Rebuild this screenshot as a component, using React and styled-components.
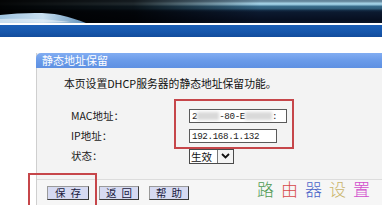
import React from "react";
import styled, { createGlobalStyle } from "styled-components";

const Global = createGlobalStyle`
  html, body { margin: 0; padding: 0; background: #ffffff; overflow: hidden; }
  body { width: 382px; height: 205px; font-family: "Noto Sans CJK SC", "Liberation Sans", sans-serif; }
`;

const Page = styled.div`
  position: relative;
  width: 382px;
  height: 205px;
  overflow: hidden;
  background: #ffffff;
`;

const Banner = styled.div`
  position: relative;
  height: 23px;
  background:
    linear-gradient(90deg, rgba(0,0,0,0.97) 0%, rgba(0,0,0,0.8) 35%, rgba(0,0,0,0) 68%),
    linear-gradient(180deg,
      #5e7f96 0px, #6f93a8 2px, #a6d2e6 3px, #8fc0d8 5px, #3b6f8e 6px, #2d5a78 9px,
      #16304a 10px, #0c1a30 12px, #070f20 20px, #0b1628 23px);
  overflow: hidden;
`;

const Wave = styled.svg`
  position: absolute;
  left: 0;
  bottom: 0;
`;

const WhiteLine = styled.div`
  height: 2px;
  background: #ffffff;
`;

const BlueBar = styled.div`
  height: 12px;
  background: linear-gradient(180deg, #1b5fb6 0%, #1656ab 60%, #134c9c 100%);
`;

const Content = styled.div`
  padding: 16px 0 0 36px;
`;

const Panel = styled.div`
  border-left: 1px solid #cfcfcf;
  background: #f3f3f3;
`;

const PanelHeader = styled.div`
  height: 15px;
  line-height: 15px;
  padding-left: 6px;
  margin-left: -1px;
  border-top-left-radius: 5px;
  background: linear-gradient(180deg, #82adf2 0%, #6a9be9 50%, #5e90e2 100%);
  color: #ffffff;
  font-size: 11px;
`;

const PanelBody = styled.div`
  padding: 8px 0 13px 27px;
  border-bottom: 1px solid #dcdcdc;
`;

const Desc = styled.div`
  font-size: 10.8px;
  line-height: 14px;
  color: #111;
  white-space: nowrap;
`;

const Form = styled.div`
  display: grid;
  grid-template-columns: 118px auto;
  grid-auto-rows: 20px;
  margin-top: 16px;
  padding-left: 7px;
`;

const Label = styled.div`
  font-size: 10.5px;
  line-height: 20px;
  color: #1a1a1a;
  white-space: nowrap;
`;

const Field = styled.div`
  display: flex;
  align-items: center;
`;

const Input = styled.div`
  box-sizing: border-box;
  width: ${(p) => p.$w}px;
  height: 14px;
  border: 1px solid #5a5a5a;
  background: #ffffff;
  display: flex;
  align-items: center;
  padding-left: 2px;
  font-family: "Liberation Mono", monospace;
  font-size: 9.2px;
  letter-spacing: -0.35px;
  color: #222;
  white-space: nowrap;
  overflow: hidden;
`;

const Blur = styled.span`
  display: inline-block;
  width: ${(p) => p.$w}px;
  height: 8px;
  background: #d9d9d9;
  filter: blur(1.5px);
`;

const Select = styled.div`
  box-sizing: border-box;
  width: 45px;
  height: 15px;
  border: 1px solid #4a4a4a;
  background: #ffffff;
  display: flex;
`;

const SelectText = styled.div`
  flex: 1;
  font-size: 10.5px;
  line-height: 13px;
  padding-left: 1px;
  color: #111;
`;

const SelectBtn = styled.div`
  width: 15px;
  border-left: 1px solid #7a7a7a;
  display: flex;
  align-items: center;
  justify-content: center;
  background: #f4f4f4;
`;

const ButtonRow = styled.div`
  display: flex;
  gap: 10px;
  padding: 6px 0 0 10px;
  height: 20px;
  background: #f6f6f6;
`;

const Button = styled.div`
  box-sizing: border-box;
  width: ${(p) => p.$w}px;
  height: 14px;
  background: #d6daf2;
  border: 1px solid;
  border-color: #9a9a9a #3a3a3a #3a3a3a #9a9a9a;
  font-size: 10.5px;
  line-height: 12px;
  color: #1a1a40;
  text-align: center;
  letter-spacing: 5px;
  padding-left: 5px;
`;

const RedBox = styled.div`
  position: absolute;
  left: ${(p) => p.$x}px;
  top: ${(p) => p.$y}px;
  width: ${(p) => p.$w}px;
  height: ${(p) => p.$h}px;
  box-sizing: border-box;
  border: 2px solid #c6464a;
`;

const Watermark = styled.div`
  position: absolute;
  left: 257px;
  top: 178px;
  display: flex;
  gap: 7px;
  font-size: 17px;
  line-height: 22px;
  font-weight: 300;
`;

const Char = styled.span`
  color: ${(p) => p.$c};
  width: 17px;
`;

export default function App() {
  return (
    <Page>
      <Global />
      <Banner>
        <Wave width="130" height="23" viewBox="0 0 130 23">
          <defs>
            <linearGradient id="wv" x1="0" y1="0" x2="1" y2="0">
              <stop offset="0" stopColor="#9fc3df" />
              <stop offset="0.5" stopColor="#c8dff0" />
              <stop offset="1" stopColor="#5f8fb8" />
            </linearGradient>
          </defs>
          <path d="M0 15 C 20 13, 45 12, 60 15 C 70 17, 78 20, 86 23 L 0 23 Z" fill="url(#wv)" />
          <path d="M0 19 C 25 18, 50 19, 70 22 L 0 23 Z" fill="#e6f0f8" opacity="0.6" />
        </Wave>
      </Banner>
      <WhiteLine />
      <BlueBar />
      <Content>
        <Panel>
          <PanelHeader>静态地址保留</PanelHeader>
          <PanelBody>
            <Desc>本页设置DHCP服务器的静态地址保留功能。</Desc>
            <Form>
              <Label>MAC地址：</Label>
              <Field>
                <Input $w={98}>
                  2<Blur $w={22} />-80-E<Blur $w={27} />:
                </Input>
              </Field>
              <Label>IP地址：</Label>
              <Field>
                <Input $w={88}>192.168.1.132</Input>
              </Field>
              <Label>状态：</Label>
              <Field>
                <Select>
                  <SelectText>生效</SelectText>
                  <SelectBtn>
                    <svg width="9" height="6" viewBox="0 0 9 6">
                      <path d="M1 1 L4.5 4.5 L8 1" fill="none" stroke="#111" strokeWidth="1.8" />
                    </svg>
                  </SelectBtn>
                </Select>
              </Field>
            </Form>
          </PanelBody>
          <ButtonRow>
            <Button $w={42}>保存</Button>
            <Button $w={40}>返回</Button>
            <Button $w={40}>帮助</Button>
          </ButtonRow>
        </Panel>
      </Content>
      <RedBox $x={174} $y={99} $w={120} $h={50} />
      <RedBox $x={28} $y={173} $w={69} $h={40} />
      <Watermark>
        <Char $c="#4f9a52">路</Char>
        <Char $c="#d64848">由</Char>
        <Char $c="#4a64c8">器</Char>
        <Char $c="#c9b46a">设</Char>
        <Char $c="#d24ccc">置</Char>
      </Watermark>
    </Page>
  );
}
